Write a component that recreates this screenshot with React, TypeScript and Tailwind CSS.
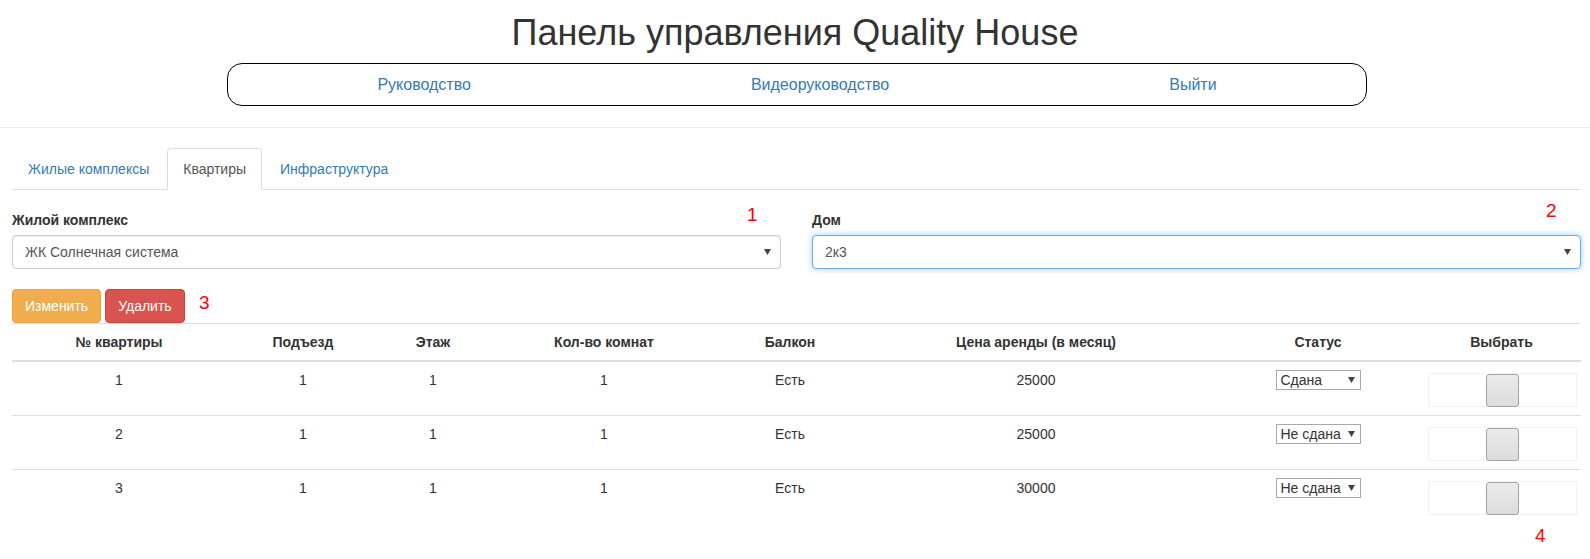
import React from "react";

const cols = [214, 154, 106, 236, 136, 356, 208, 159];
const headers = ["№ квартиры", "Подъезд", "Этаж", "Кол-во комнат", "Балкон", "Цена аренды (в месяц)", "Статус", "Выбрать"];
const rows = [
  { n: "1", p: "1", e: "1", k: "1", b: "Есть", c: "25000", s: "Сдана" },
  { n: "2", p: "1", e: "1", k: "1", b: "Есть", c: "25000", s: "Не сдана" },
  { n: "3", p: "1", e: "1", k: "1", b: "Есть", c: "30000", s: "Не сдана" },
];

function Caret() {
  return (
    <svg width="7" height="6" viewBox="0 0 7 6" className="shrink-0">
      <path d="M0 0 H7 L3.5 6 Z" fill="#444" />
    </svg>
  );
}

function FakeSelect({ value, focused }: { value: string; focused?: boolean }) {
  return (
    <div
      className={
        "h-[34px] w-full rounded-[4px] border bg-white flex items-center justify-between pl-[12px] pr-[9px] text-[14px] text-[#555] " +
        (focused
          ? "border-[#66afe9] shadow-[0_0_6px_rgba(102,175,233,0.6)]"
          : "border-[#ccc] shadow-[inset_0_1px_1px_rgba(0,0,0,0.075)]")
      }
    >
      <span>{value}</span>
      <Caret />
    </div>
  );
}

export default function App() {
  return (
    <div className="relative min-h-[559px] bg-white font-['Liberation_Sans',Arial,sans-serif] text-[14px] leading-[20px] text-[#333]">
      {/* header */}
      <div className="border-b border-[#eee] pt-[13px] pb-[21px]">
        <h1 className="text-center text-[36px] leading-[40px] text-[#333]">Панель управления Quality House</h1>
        <div className="ml-[227px] mt-[10px] flex h-[43px] w-[1140px] items-center justify-center gap-[280px] rounded-[15px] border border-black text-[16px]">
          <a className="text-[#337ab7]">Руководство</a>
          <a className="text-[#337ab7]">Видеоруководство</a>
          <a className="text-[#337ab7]">Выйти</a>
        </div>
      </div>

      <div className="pl-[12px] pr-[9px] pt-[20px]">
        {/* tabs */}
        <div className="flex border-b border-[#ddd]">
          <div className="-mb-px mr-[2px] h-[42px] rounded-t-[4px] border border-transparent px-[15px] pt-[10px] text-[#337ab7]">Жилые комплексы</div>
          <div className="-mb-px mr-[2px] h-[42px] rounded-t-[4px] border border-[#ddd] border-b-white bg-white px-[15px] pt-[10px] text-[#555]">Квартиры</div>
          <div className="-mb-px mr-[2px] h-[42px] rounded-t-[4px] border border-transparent px-[15px] pt-[10px] text-[#337ab7]">Инфраструктура</div>
        </div>

        {/* selects */}
        <div className="mt-[20px] grid grid-cols-2 gap-[31px]">
          <div>
            <div className="mb-[5px] font-bold">Жилой комплекс</div>
            <FakeSelect value="ЖК Солнечная система" />
          </div>
          <div>
            <div className="mb-[5px] font-bold">Дом</div>
            <FakeSelect value="2к3" focused />
          </div>
        </div>

        {/* buttons */}
        <div className="mt-[20px] flex gap-[4px]">
          <button className="h-[34px] rounded-[4px] border border-[#eea236] bg-[#f0ad4e] px-[12px] text-[14px] text-white">Изменить</button>
          <button className="h-[34px] rounded-[4px] border border-[#d43f3a] bg-[#d9534f] px-[12px] text-[14px] text-white">Удалить</button>
        </div>

        {/* table */}
        <table className="w-full table-fixed border-collapse border-t border-[#ddd]">
          <colgroup>
            {cols.map((w, i) => (
              <col key={i} style={{ width: w }} />
            ))}
          </colgroup>
          <thead>
            <tr className="border-b-2 border-[#ddd]">
              {headers.map((h) => (
                <th key={h} className="p-[8px] text-center font-bold leading-[20px]">{h}</th>
              ))}
            </tr>
          </thead>
          <tbody>
            {rows.map((r, i) => (
              <tr key={i} className={i < rows.length - 1 ? "border-b border-[#ddd]" : ""}>
                {[r.n, r.p, r.e, r.k, r.b, r.c].map((v, j) => (
                  <td key={j} className="p-[8px] text-center align-top leading-[20px]">{v}</td>
                ))}
                <td className="p-[8px] align-top">
                  <div className="mx-auto flex h-[20px] w-[85px] items-center justify-between border border-[#a9a9a9] bg-white pl-[4px] pr-[5px] text-[14px] text-[#333]">
                    <span>{r.s}</span>
                    <Caret />
                  </div>
                </td>
                <td className="pl-[6px] pr-[4px] pt-[8px] pb-[8px] align-top">
                  <div className="mt-[3px] flex h-[34px] w-full items-center justify-center border border-[#f2f2f2]">
                    <div className="h-[33px] w-[33px] rounded-[3px] border border-[#a3a3a3] bg-gradient-to-b from-[#ebebeb] to-[#dcdcdc]" />
                  </div>
                </td>
              </tr>
            ))}
          </tbody>
        </table>
      </div>

      {/* annotation numbers */}
      <span className="absolute left-[747px] top-[204px] text-[19px] leading-[22px] text-[#ff0000]">1</span>
      <span className="absolute left-[1546px] top-[200px] text-[19px] leading-[22px] text-[#ff0000]">2</span>
      <span className="absolute left-[199px] top-[292px] text-[19px] leading-[22px] text-[#ff0000]">3</span>
      <span className="absolute left-[1535px] top-[525px] text-[19px] leading-[22px] text-[#ff0000]">4</span>
    </div>
  );
}
